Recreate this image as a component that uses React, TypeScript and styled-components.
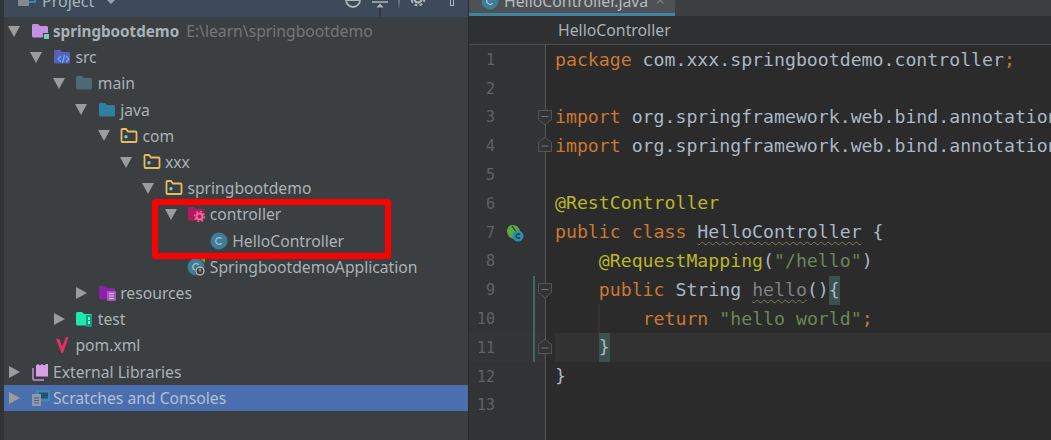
import React from "react";
import styled, { createGlobalStyle } from "styled-components";

const GlobalStyle = createGlobalStyle`
  html, body {
    margin: 0;
    padding: 0;
    background: #3c3f41;
  }
`;

const Folder = ({ fill }: { fill: string }) => (
  <path d="M1 3.5C1 2.7 1.6 2 2.5 2H7l2 2h6.5c.8 0 1.5.7 1.5 1.5V14c0 .8-.7 1.5-1.5 1.5h-13C1.6 15.500 1 14.800 1 14Z" fill={fill} />
);

const Gear = ({ cx, cy, color }: { cx: number; cy: number; color: string }) => (
  <g>
    <circle cx={cx} cy={cy} r="3" fill="none" stroke={color} strokeWidth="2" />
    <circle cx={cx} cy={cy} r="5" fill="none" stroke={color} strokeWidth="1.500" strokeDasharray="1.800 2.100" />
  </g>
);

const ClassIcon = () => (
  <g>
    <circle cx="9" cy="9" r="8.500" fill="#3e7c97" />
    <path d="M11.500 6.800A3.300 3.300 0 1 0 11.500 11.200" fill="none" stroke="#a9c4cf" strokeWidth="1.300" />
  </g>
);

const icons: Record<string, React.ReactNode> = {
  module: (
    <g>
      <Folder fill="#c78ee6" />
      <rect x="12" y="11" width="6" height="6" fill="#3c3f41" />
      <rect x="13" y="12" width="5" height="5" fill="#6fd0bd" />
    </g>
  ),
  src: (
    <g>
      <Folder fill="#5a5fbd" />
      <path d="M8 8l-3 3 3 3M13 8l3 3-3 3M11.500 7l-2 8" fill="none" stroke="#5cb8ee" strokeWidth="1.200" />
    </g>
  ),
  main: <Folder fill="#4f6874" />,
  java: <Folder fill="#2f7f9f" />,
  pkg: (
    <g>
      <path d="M1.500 4.500V3c0-.5.400-1 1-1H6l2 2.500h7.500c.5 0 1 .5 1 1V14c0 .5-.5 1-1 1h-13c-.6 0-1-.5-1-1Z" fill="none" stroke="#e7bb62" strokeWidth="1.800" />
      <circle cx="6" cy="9.800" r="1.700" fill="#6fd0bd" />
    </g>
  ),
  controller: (
    <g>
      <Folder fill="#b01a5e" />
      <Gear cx={12.500} cy={11.500} color="#f06b9e" />
    </g>
  ),
  cls: <ClassIcon />,
  app: (
    <g>
      <ClassIcon />
      <path d="M13 0h5v5Z" fill="#57ad41" />
      <circle cx="13" cy="13" r="5" fill="#3c3f41" />
      <circle cx="13" cy="13" r="4" fill="none" stroke="#bdbdbd" strokeWidth="1.300" />
      <path d="M13 10.500v3" stroke="#bdbdbd" strokeWidth="1.300" />
    </g>
  ),
  resources: (
    <g>
      <Folder fill="#8b22a8" />
      <rect x="9" y="7" width="9" height="10" rx="1" fill="#a857c2" />
      <path d="M11 9.500h5M11 12h5M11 14.500h5" stroke="#e0bfe8" strokeWidth="1" />
    </g>
  ),
  test: (
    <g>
      <Folder fill="#1fe8ae" />
      <rect x="11" y="5" width="6" height="12" rx="1" fill="#0f9a7c" />
      <rect x="13" y="7" width="2" height="3" fill="#7ce9cd" />
      <rect x="13" y="11" width="2" height="3" fill="#7ce9cd" />
    </g>
  ),
  pom: <path d="M3 3h3.500l2.500 8L13 1h2.500L10 17H8.500Z" fill="#e8315f" />,
  libraries: (
    <g>
      <path d="M2 5v11c0 .6.400 1 1 1h10" fill="none" stroke="#c78ed8" strokeWidth="1.500" />
      <path d="M5 2.500 7 1l2 1.500L11 1l2 1.500L15 1h2v12.500H5Z" fill="#d8a1e6" />
    </g>
  ),
  scratches: (
    <g>
      <rect x="5" y="1" width="14" height="11" fill="#3d8ab0" />
      <rect x="8" y="3.500" width="9" height="6" fill="#27506e" />
      <rect x="1" y="5" width="9" height="12" fill="#8f98a8" />
      <path d="M3 9h5M3 11.500h5M3 14h5" stroke="#5a6478" strokeWidth="1" />
    </g>
  ),
};

type TreeItem = {
  depth: number;
  arrow?: "down" | "right";
  icon: string;
  label: string;
  hint?: string;
  bold?: boolean;
  selected?: boolean;
};

const tree: TreeItem[] = [
  { depth: 0, arrow: "down", icon: "module", label: "springbootdemo", hint: "E:\\learn\\springbootdemo", bold: true },
  { depth: 1, arrow: "down", icon: "src", label: "src" },
  { depth: 2, arrow: "down", icon: "main", label: "main" },
  { depth: 3, arrow: "down", icon: "java", label: "java" },
  { depth: 4, arrow: "down", icon: "pkg", label: "com" },
  { depth: 5, arrow: "down", icon: "pkg", label: "xxx" },
  { depth: 6, arrow: "down", icon: "pkg", label: "springbootdemo" },
  { depth: 7, arrow: "down", icon: "controller", label: "controller" },
  { depth: 8, icon: "cls", label: "HelloController" },
  { depth: 7, icon: "app", label: "SpringbootdemoApplication" },
  { depth: 3, arrow: "right", icon: "resources", label: "resources" },
  { depth: 2, arrow: "right", icon: "test", label: "test" },
  { depth: 1, icon: "pom", label: "pom.xml" },
  { depth: 0, arrow: "right", icon: "libraries", label: "External Libraries" },
  { depth: 0, arrow: "right", icon: "scratches", label: "Scratches and Consoles", selected: true },
];

type Token = { kind?: "kw" | "ann" | "str" | "plain" | "unused" | "brace"; text: string; wavy?: boolean };

const code: { tokens: Token[]; guide?: boolean }[] = [
  { tokens: [{ kind: "kw", text: "package " }, { text: "com.xxx.springbootdemo.controller" }, { kind: "kw", text: ";" }] },
  { tokens: [] },
  { tokens: [{ kind: "kw", text: "import " }, { text: "org.springframework.web.bind.annotation.RequestMapping" }, { kind: "kw", text: ";" }] },
  { tokens: [{ kind: "kw", text: "import " }, { text: "org.springframework.web.bind.annotation.RestController" }, { kind: "kw", text: ";" }] },
  { tokens: [] },
  { tokens: [{ kind: "ann", text: "@RestController" }] },
  { tokens: [{ kind: "kw", text: "public class " }, { text: "HelloController", wavy: true }, { text: " {" }] },
  { tokens: [{ text: "    " }, { kind: "ann", text: "@RequestMapping" }, { text: "(" }, { kind: "str", text: "\"/hello\"" }, { text: ")" }] },
  { tokens: [{ text: "    " }, { kind: "kw", text: "public " }, { text: "String " }, { kind: "unused", text: "hello", wavy: true }, { text: "()" }, { kind: "brace", text: "{" }] },
  { guide: true, tokens: [{ text: "    " }, { kind: "kw", text: "return " }, { kind: "str", text: "\"hello world\"" }, { kind: "kw", text: ";" }] },
  { tokens: [{ text: "    " }, { kind: "brace", text: "}" }] },
  { tokens: [{ text: "}" }] },
  { tokens: [] },
];

const App = () => (
  <Page>
    <GlobalStyle />
    <ProjectPanel>
      <PanelHeader>
        <HeaderIcon viewBox="0 0 18 22" width="18" height="22">
          <rect x="5" y="0" width="12" height="12" fill="none" stroke="#3f85a8" strokeWidth="2" />
          <rect x="0" y="2" width="11" height="14" fill="#7f8a96" />
          <rect x="3" y="0" width="5" height="9" fill="#3b4754" />
        </HeaderIcon>
        <HeaderTitle>Project</HeaderTitle>
        <HeaderCaret />
        <HeaderTools>
          <svg width="18" height="18" viewBox="0 0 18 18">
            <circle cx="9" cy="9" r="7" fill="none" stroke="#aeb4ba" strokeWidth="1.800" />
            <path d="M9 2v7M2 9h14" stroke="#aeb4ba" strokeWidth="1.800" />
          </svg>
          <PinIcon width="18" height="18" viewBox="0 0 18 18">
            <path d="M1 11h16" stroke="#aeb4ba" strokeWidth="1.500" />
            <path d="M9 12.500l-3.500 4h7Z" fill="#aeb4ba" />
            <path d="M9 16.500v9" stroke="#20272e" strokeWidth="1" />
          </PinIcon>
          <ToolSeparator />
          <svg width="18" height="18" viewBox="0 0 18 18">
            <circle cx="9" cy="8" r="3.500" fill="none" stroke="#aeb4ba" strokeWidth="2.400" />
            <circle cx="9" cy="8" r="6.400" fill="none" stroke="#aeb4ba" strokeWidth="2" strokeDasharray="3 2.200" />
          </svg>
          <ToolCaret />
          <ToolBar />
        </HeaderTools>
      </PanelHeader>
      <Tree>
        {tree.map((item) => (
          <Row key={item.label + item.depth} $depth={item.depth} $selected={item.selected}>
            <ArrowSlot>{item.arrow && <Arrow $dir={item.arrow} />}</ArrowSlot>
            <svg width="19" height="18" viewBox="0 0 19 18">
              {icons[item.icon]}
            </svg>
            <RowLabel $bold={item.bold} $selected={item.selected}>
              {item.label}
            </RowLabel>
            {item.hint && <RowHint>{item.hint}</RowHint>}
          </Row>
        ))}
      </Tree>
      <Highlight />
    </ProjectPanel>
    <EditorPanel>
      <TabBar>
        <Tab>
          <svg width="18" height="18" viewBox="0 0 18 18">
            <ClassIcon />
          </svg>
          <TabTitle>HelloController.java</TabTitle>
          <TabClose>×</TabClose>
        </Tab>
      </TabBar>
      <Breadcrumb>HelloController</Breadcrumb>
      <EditorBody>
        <Gutter>
          {code.map((_, i) => {
            const n = i + 1;
            return (
              <GutterRow key={n} $current={n === 11}>
                <LineNumber>{n}</LineNumber>
                <MarkCell $changed={n >= 9 && n <= 11}>
                  {n === 7 && (
                    <svg width="18" height="18" viewBox="0 0 18 18">
                      <path d="M6 1c4 0 7 2 8 6-1 1-2 1.500-3 2.500-1 1-1.500 3-2 5.500C5 15 1 12 1 7c0-3 2-6 5-6Z" fill="#5aa83f" />
                      <path d="M6 2 11 9" stroke="#2f3133" strokeWidth="1.200" />
                      <circle cx="12" cy="12" r="5.500" fill="#2a8cb0" />
                      <path d="M14 10.600A2.200 2.200 0 1 0 14 13.400" fill="none" stroke="#0d2c3a" strokeWidth="1.200" />
                    </svg>
                  )}
                </MarkCell>
                {(n === 3 || n === 9) && (
                  <Fold viewBox="0 0 14 16" width="14" height="16">
                    <path d="M.5.500h13v9L7 15 .5 9.500Z" fill="#313335" stroke="#555" />
                    <path d="M3.500 6.500h7" stroke="#777" />
                  </Fold>
                )}
                {(n === 4 || n === 11) && (
                  <Fold $up viewBox="0 0 14 16" width="14" height="16">
                    <path d="M.5 15.500h13v-9L7 1 .5 6.500Z" fill="#313335" stroke="#555" />
                    <path d="M3.500 10h7" stroke="#777" />
                  </Fold>
                )}
              </GutterRow>
            );
          })}
        </Gutter>
        <Code>
          {code.map((line, i) => (
            <CodeLine key={i} $current={i === 10}>
              {line.tokens.map((t, j) => (
                <React.Fragment key={j}>
                  <Tok $kind={t.kind} $wavy={t.wavy}>
                    {t.text}
                  </Tok>
                  {line.guide && j === 0 && <Guide />}
                  {line.guide && j === 0 && <Tok>{"    "}</Tok>}
                </React.Fragment>
              ))}
            </CodeLine>
          ))}
        </Code>
      </EditorBody>
    </EditorPanel>
  </Page>
);

const LINE = 28.8;

const tokenColors: Record<string, string> = {
  plain: "#a9b7c6",
  kw: "#cc7832",
  ann: "#bbb529",
  str: "#6a8759",
  unused: "#808080",
  brace: "#a9b7c6",
};

const Page = styled.div`
  display: flex;
  width: 1051px;
  height: 440px;
  overflow: hidden;
  position: relative;
  font-family: "Noto Sans", sans-serif;
`;

const ProjectPanel = styled.div`
  width: 469px;
  flex: none;
  box-sizing: border-box;
  border-left: 4px solid #313335;
  border-right: 1px solid #2b2b2b;
  background: #3c3f41;
  display: flex;
  flex-direction: column;
`;

const PanelHeader = styled.div`
  height: 17px;
  flex: none;
  display: flex;
  align-items: flex-end;
  background: #3c4a5a;
  overflow: hidden;
  padding-left: 14px;
  padding-right: 14px;
`;

const HeaderIcon = styled.svg`
  flex: none;
  margin-bottom: 5px;
`;

const HeaderTitle = styled.span`
  margin-left: 6px;
  font-size: 16px;
  line-height: 22px;
  margin-bottom: 5px;
  color: #a9b2bb;
`;

const HeaderCaret = styled.span`
  width: 0;
  height: 0;
  margin-left: 13px;
  margin-bottom: 13px;
  border-left: 4px solid transparent;
  border-right: 4px solid transparent;
  border-top: 4px solid #9aa3ac;
`;

const HeaderTools = styled.div`
  margin-left: auto;
  display: flex;
  align-items: center;
  gap: 9px;
  margin-bottom: 8px;
`;

const PinIcon = styled.svg`
  overflow: visible;
`;

const ToolSeparator = styled.span`
  width: 2px;
  height: 18px;
  background: linear-gradient(#aeb4ba, #3c4a5a);
`;

const ToolCaret = styled.span`
  width: 0;
  height: 0;
  margin-left: -5px;
  margin-bottom: 8px;
  border-left: 3px solid transparent;
  border-right: 3px solid transparent;
  border-top: 3px solid #aeb4ba;
`;

const ToolBar = styled.span`
  width: 4px;
  height: 16px;
  margin-left: 4px;
  margin-top: -4px;
  box-sizing: border-box;
  border: 1px solid #aeb4ba;
`;

const Tree = styled.div`
  padding-top: 1px;
`;

const Row = styled.div<{ $depth: number; $selected?: boolean }>`
  height: 26.2px;
  display: flex;
  align-items: center;
  padding-left: ${(p) => 4 + p.$depth * 22.4}px;
  background: ${(p) => (p.$selected ? "#4b6eaf" : "transparent")};
`;

const ArrowSlot = styled.span`
  width: 22.5px;
  flex: none;
  display: flex;
  align-items: center;
`;

const Arrow = styled.span<{ $dir: "down" | "right" }>`
  width: 0;
  height: 0;
  ${(p) =>
    p.$dir === "down"
      ? `border-left: 6px solid transparent;
         border-right: 6px solid transparent;
         border-top: 11px solid #9a9c9e;`
      : `margin-left: 1px;
         border-top: 6px solid transparent;
         border-bottom: 6px solid transparent;
         border-left: 11px solid #9a9c9e;`}
`;

const RowLabel = styled.span<{ $bold?: boolean; $selected?: boolean }>`
  margin-left: 3.5px;
  font-size: ${(p) => (p.$bold ? 15.2 : 15.7)}px;
  white-space: nowrap;
  font-weight: ${(p) => (p.$bold ? 700 : 400)};
  color: ${(p) => (p.$selected ? "#b4c0d4" : "#a9b2b6")};
`;

const RowHint = styled.span`
  margin-left: 7px;
  font-size: 15.7px;
  white-space: nowrap;
  color: #747779;
`;

const Highlight = styled.div`
  position: absolute;
  left: 152px;
  top: 199px;
  width: 239px;
  height: 60px;
  box-sizing: border-box;
  border: 6px solid #ff0000;
  border-radius: 3px;
`;

const EditorPanel = styled.div`
  flex: 1;
  min-width: 0;
  display: flex;
  flex-direction: column;
  background: #2b2b2b;
`;

const TabBar = styled.div`
  height: 16px;
  flex: none;
  display: flex;
  align-items: flex-end;
  background: #3c3f41;
  overflow: hidden;
`;

const Tab = styled.div`
  width: 206px;
  height: 16px;
  flex: none;
  box-sizing: border-box;
  display: flex;
  align-items: flex-end;
  padding-left: 12px;
  background: #4e5254;
  box-shadow: inset 0 -3px 0 #4083a0;
  position: relative;

  svg {
    flex: none;
    margin-bottom: 6px;
  }
`;

const TabTitle = styled.span`
  margin-left: 5px;
  font-size: 15.8px;
  line-height: 22px;
  margin-bottom: 4px;
  white-space: nowrap;
  color: #b4bcc0;
`;

const TabClose = styled.span`
  margin-left: 7px;
  font-size: 17px;
  line-height: 22px;
  margin-bottom: 5px;
  color: #7d8285;
`;

const Breadcrumb = styled.div`
  height: 29px;
  flex: none;
  box-sizing: border-box;
  padding-left: 89px;
  font-size: 15.8px;
  line-height: 29px;
  color: #a9b2b6;
  background: #2f3032;
  border-bottom: 1px solid #4d4d4d;
`;

const EditorBody = styled.div`
  flex: 1;
  display: flex;
  min-height: 0;
`;

const Gutter = styled.div`
  width: 76px;
  flex: none;
  background: #313335;
  border-right: 1px solid #555;
  padding-top: 0.5px;
`;

const GutterRow = styled.div<{ $current?: boolean }>`
  height: ${LINE}px;
  display: flex;
  align-items: center;
  position: relative;
  background: ${(p) => (p.$current ? "#333536" : "transparent")};
`;

const LineNumber = styled.span`
  width: 26px;
  flex: none;
  text-align: right;
  font-family: "DejaVu Sans Mono", monospace;
  font-size: 15px;
  color: #606366;
`;

const MarkCell = styled.span<{ $changed?: boolean }>`
  width: 40px;
  height: 100%;
  flex: none;
  box-sizing: border-box;
  display: flex;
  align-items: center;
  padding-left: 11px;
  border-right: 2px solid ${(p) => (p.$changed ? "#46685a" : "transparent")};
`;

const Fold = styled.svg<{ $up?: boolean }>`
  position: absolute;
  right: -7px;
  top: ${(p) => (p.$up ? 4.5 : 7)}px;
  z-index: 1;
`;

const Code = styled.div`
  flex: 1;
  min-width: 0;
  margin-left: 9px;
  padding-top: 0.5px;
  font-family: "DejaVu Sans Mono", monospace;
  font-size: 18.2px;
`;

const CodeLine = styled.div<{ $current?: boolean }>`
  height: ${LINE}px;
  line-height: ${LINE}px;
  white-space: pre;
  background: ${(p) => (p.$current ? "#323232" : "transparent")};
`;

const Tok = styled.span<{ $kind?: string; $wavy?: boolean }>`
  color: ${(p) => tokenColors[p.$kind || "plain"]};
  ${(p) =>
    p.$kind === "brace" &&
    `background: #3b514d;
     display: inline-block;
     height: 100%;`}
  ${(p) =>
    p.$wavy &&
    `text-decoration: underline wavy #7c7c52 1px;
     text-underline-offset: 3px;`}
`;

const Guide = styled.span`
  display: inline-block;
  width: 0;
  height: ${LINE}px;
  vertical-align: top;
  box-shadow: 0 0 0 0.5px #3d3d3d;
`;

export default App;
